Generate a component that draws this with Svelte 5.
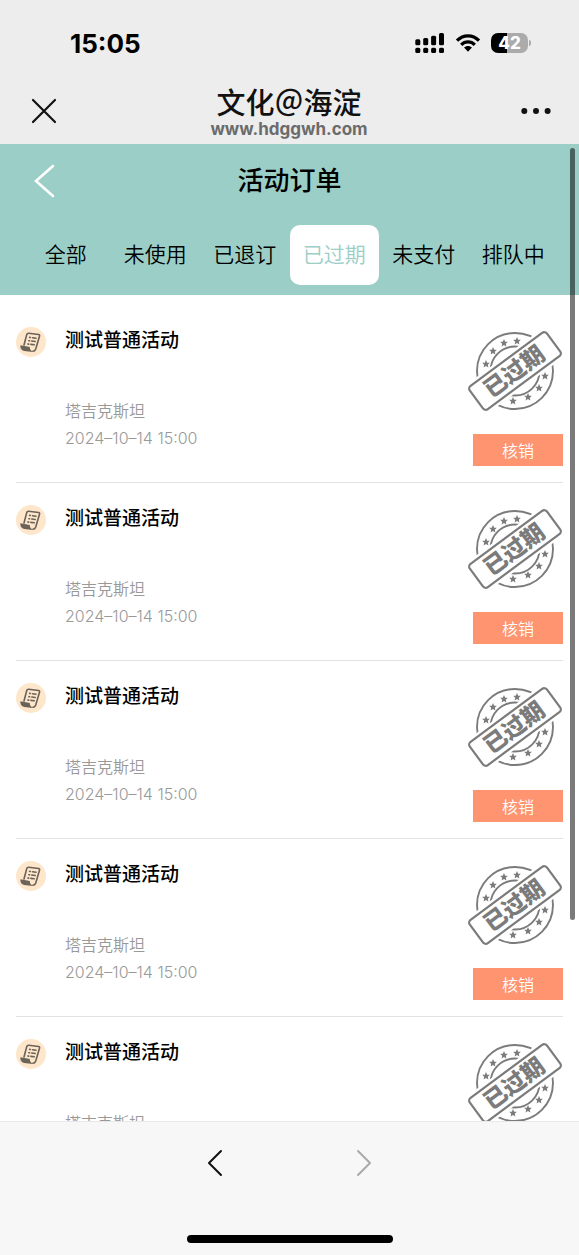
<script lang="ts">
  type Order = { id: number; title: string; place: string; time: string };

  const tabs = ["全部", "未使用", "已退订", "已过期", "未支付", "排队中"];
  let activeTab = $state("已过期");

  const orders: Order[] = [1, 2, 3, 4, 5].map((id) => ({
    id,
    title: "测试普通活动",
    place: "塔吉克斯坦",
    time: "2024–10–14 15:00",
  }));

  // star centres, relative to the middle of the stamp
  const stars = [
    [-29, -7],
    [-22, -20],
    [-11, -28],
    [2, -30],
    [30, 5],
    [24, 17],
    [13, 26],
    [-2, 30],
  ];
</script>

<div class="screen">
  <header class="browser">
    <div class="status">
      <span class="clock">15:05</span>
      <div class="indicators">
        <svg width="30" height="20" viewBox="0 0 30 20" aria-hidden="true">
          <rect x="0.3" y="6.3" width="5" height="6" rx="1.5" />
          <rect x="8.2" y="5" width="5" height="7.3" rx="1.5" />
          <rect x="16.1" y="2.8" width="5" height="9.5" rx="1.5" />
          <rect x="24" y="0" width="5" height="12.3" rx="1.5" />
          <rect x="0.3" y="14.8" width="5" height="5.2" rx="1.5" />
          <rect x="8.2" y="14.8" width="5" height="5.2" rx="1.5" />
          <rect x="16.1" y="14.8" width="5" height="5.2" rx="1.5" />
          <rect x="24" y="14.8" width="5" height="5.2" rx="1.5" />
        </svg>
        <svg width="26" height="20" viewBox="0 0 26 20" aria-hidden="true">
          <g fill="none" stroke="#000" stroke-width="3.3">
            <path d="M2 7.6C8.3 1.2 17.7 1.2 24 7.6" />
            <path d="M6.2 11.8C10 8 16 8 19.8 11.8" />
          </g>
          <path d="M13 18.8L9 14.6C11.2 12.5 14.8 12.5 17 14.6Z" />
        </svg>
        <div class="battery">
          <span>42</span>
        </div>
      </div>
    </div>
    <div class="nav">
      <button type="button" class="icon-button" aria-label="关闭">
        <svg width="26" height="26" viewBox="0 0 26 26">
          <path d="M2 2L24 24M24 2L2 24" fill="none" stroke="#111" stroke-width="2.2" stroke-linecap="round" />
        </svg>
      </button>
      <div class="site">
        <div class="site-name">文化＠海淀</div>
        <div class="site-url">www.hdggwh.com</div>
      </div>
      <button type="button" class="icon-button" aria-label="更多">
        <svg width="30" height="8" viewBox="0 0 30 8">
          <circle cx="3.3" cy="4" r="3" fill="#111" />
          <circle cx="15" cy="4" r="3" fill="#111" />
          <circle cx="26.6" cy="4" r="3" fill="#111" />
        </svg>
      </button>
    </div>
  </header>

  <main>
    <div class="top">
      <div class="title-bar">
        <button type="button" class="icon-button" aria-label="返回">
          <svg width="22" height="34" viewBox="0 0 22 34">
            <path d="M20 2L3 17L20 32" fill="none" stroke="#fff" stroke-width="2.6" stroke-linecap="round" />
          </svg>
        </button>
        <h1>活动订单</h1>
      </div>
      <div class="tabs" role="tablist">
        {#each tabs as tab}
          <button
            type="button"
            role="tab"
            class="tab"
            class:active={activeTab === tab}
            aria-selected={activeTab === tab}
            onclick={() => (activeTab = tab)}
          >
            {tab}
          </button>
        {/each}
      </div>
    </div>

    <ul class="orders">
      {#each orders as order (order.id)}
        <li class="order">
          <svg class="badge" width="30" height="30" viewBox="0 0 30 30" aria-hidden="true">
            <circle cx="15" cy="15" r="15" fill="#fde6ca" />
            <g fill="none" stroke="#6b6259" stroke-width="1.6" stroke-linejoin="round" stroke-linecap="round">
              <path d="M8 18L10.8 7.4Q11.3 6.2 12.6 6.3L22.6 7.5Q23.9 7.8 23.5 9.2L19.8 21.8Q19 24.2 16.9 24.2" />
              <path d="M13.6 10.4L20 11.2M12.8 13.7L19.2 14.5M11.9 17L18.2 17.8" stroke-dasharray="0.8 2.2 9" />
            </g>
            <path d="M4.4 18.2L13.8 20C13.6 22 14.8 23.6 16.9 24.9L8.2 23.9C5.4 23.3 4 21 4.4 18.2Z" fill="#6b6259" />
          </svg>
          <div class="info">
            <h2>{order.title}</h2>
            <p>{order.place}</p>
            <p>{order.time}</p>
          </div>
          <div class="side">
            <svg class="stamp" width="96" height="82" viewBox="-48 -41 96 82">
              <g fill="none" stroke="#7b7b7b" stroke-width="1.9">
                <circle r="38" />
                <circle r="24.5" />
              </g>
              {#each stars as [x, y]}
                <path
                  transform="translate({x} {y}) scale(1.2)"
                  d="M0-3.3L1-1.1L3.2-1L1.5.6L2 2.9L0 1.7L-2 2.9L-1.5.6L-3.2-1L-1-1.1Z"
                  fill="#7b7b7b"
                />
              {/each}
              <g transform="rotate(-36.5)">
                <rect x="-52" y="-18" width="104" height="36" fill="#fff" />
                <rect x="-48" y="-14.5" width="96" height="29" rx="3.5" fill="#fff" stroke="#7b7b7b" stroke-width="2.2" />
                <text x="-1" y="8" text-anchor="middle">已过期</text>
              </g>
            </svg>
            <button type="button" class="verify">核销</button>
          </div>
        </li>
      {/each}
    </ul>
    <div class="scrollbar"></div>
  </main>

  <footer>
    <div class="history">
      <button type="button" class="icon-button" aria-label="后退">
        <svg width="16" height="28" viewBox="0 0 16 28">
          <path d="M14 2L2 14L14 26" fill="none" stroke="#111" stroke-width="2" stroke-linecap="round" stroke-linejoin="round" />
        </svg>
      </button>
      <button type="button" class="icon-button" aria-label="前进" disabled>
        <svg width="16" height="28" viewBox="0 0 16 28">
          <path d="M2 2L14 14L2 26" fill="none" stroke="#aaa" stroke-width="2" stroke-linecap="round" stroke-linejoin="round" />
        </svg>
      </button>
    </div>
    <div class="home"></div>
  </footer>
</div>

<style>
  .screen {
    height: 100vh;
    display: flex;
    flex-direction: column;
    background: #fff;
    color: #000;
    font-family: Inter, "Noto Sans CJK SC", sans-serif;
  }

  h1,
  h2,
  p,
  ul {
    margin: 0;
    padding: 0;
  }

  button {
    font-family: inherit;
    border: none;
    margin: 0;
    padding: 0;
    cursor: pointer;
  }

  svg {
    display: block;
  }

  .icon-button {
    background: none;
  }

  .browser {
    flex: none;
    background: #ededed;
  }

  .status {
    display: flex;
    align-items: center;
    justify-content: space-between;
    height: 86px;
    padding: 0 51px 0 70px;
  }

  .clock {
    font-size: 26px;
    font-weight: 700;
  }

  .indicators {
    display: flex;
    align-items: center;
    gap: 10px;
  }

  .battery {
    position: relative;
    width: 37px;
    height: 20px;
    border-radius: 7px;
    background: linear-gradient(90deg, #000 44%, #ababab 44%);
    color: #fff;
    font-size: 17px;
    font-weight: 800;
    line-height: 20px;
    text-align: center;
  }

  .battery::after {
    content: "";
    position: absolute;
    left: 38px;
    top: 7px;
    width: 2px;
    height: 6px;
    border-radius: 0 2px 2px 0;
    background: #ababab;
  }

  .nav {
    display: flex;
    align-items: center;
    justify-content: space-between;
    height: 58px;
    padding: 0 28px 8px 31px;
    box-sizing: border-box;
  }

  .site {
    padding-top: 3px;
    text-align: center;
  }

  .site-name {
    font-size: 29px;
    font-weight: 500;
    line-height: 32px;
    color: #111;
  }

  .site-url {
    font-size: 17px;
    font-weight: 700;
    line-height: 18px;
    color: #6b6b6b;
  }

  main {
    position: relative;
    flex: 1;
    min-height: 0;
    overflow: hidden;
  }

  .top {
    background: #9bcec6;
    padding-bottom: 10px;
  }

  .title-bar {
    display: grid;
    grid-template-columns: 1fr auto 1fr;
    align-items: center;
    height: 74px;
    padding: 0 33px;
    margin-bottom: 7px;
  }

  .title-bar .icon-button {
    justify-self: start;
  }

  h1 {
    font-size: 26px;
    font-weight: 500;
    line-height: 36px;
  }

  .tabs {
    display: flex;
    padding: 0 21px;
  }

  .tab {
    flex: 1;
    height: 60px;
    border-radius: 10px;
    background: none;
    font-size: 21px;
    font-weight: 350;
    line-height: 32px;
    color: #000;
    white-space: nowrap;
  }

  .tab.active {
    background: #fff;
    color: #9bcec6;
  }

  .orders {
    list-style: none;
    padding: 10px 16px;
  }

  .order {
    display: flex;
    height: 178px;
    padding-top: 22px;
    box-sizing: border-box;
    border-bottom: 1px solid #e2e2e2;
  }

  .badge {
    flex: none;
    margin-right: 19px;
  }

  .info {
    flex: 1;
  }

  h2 {
    margin-bottom: 43px;
    font-size: 19px;
    font-weight: 500;
    line-height: 28px;
  }

  p {
    font-size: 16px;
    font-weight: 350;
    line-height: 27px;
    color: #999;
  }

  .side {
    display: flex;
    flex-direction: column;
    align-items: flex-end;
    gap: 22px;
    padding-top: 3px;
  }

  .stamp text {
    font-size: 23px;
    font-weight: 900;
    fill: #7b7b7b;
  }

  .verify {
    width: 90px;
    height: 32px;
    background: #ff9470;
    color: #fff;
    font-size: 16px;
    font-weight: 350;
  }

  .scrollbar {
    position: absolute;
    top: 4px;
    right: 4px;
    width: 5px;
    height: 79%;
    border-radius: 3px;
    background: rgba(0, 0, 0, 0.52);
  }

  footer {
    flex: none;
    display: flex;
    flex-direction: column;
    align-items: center;
    justify-content: space-between;
    height: 134px;
    padding-bottom: 12px;
    box-sizing: border-box;
    border-top: 1px solid #e8e8e8;
    background: #f7f7f7;
  }

  .history {
    display: flex;
    gap: 133px;
    padding-top: 27px;
  }

  .home {
    width: 206px;
    height: 8px;
    border-radius: 4px;
    background: #000;
  }
</style>
